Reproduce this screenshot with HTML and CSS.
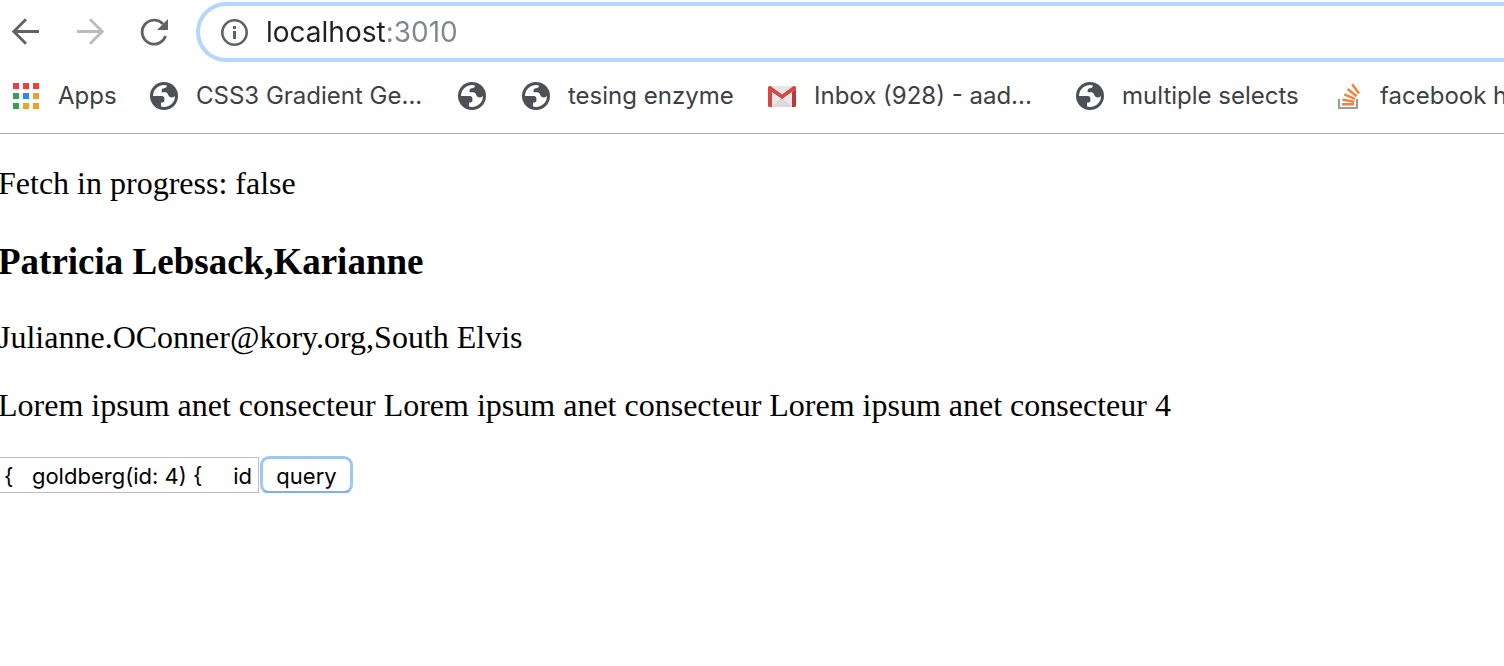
FILE: index.html
```html
<!DOCTYPE html>
<html lang="en">
<head>
<meta charset="utf-8">
<title>localhost:3010</title>
<link rel="stylesheet" href="styles.css">
</head>
<body>
<svg class="defs" aria-hidden="true">
  <symbol id="globe" viewBox="0 0 28 28">
    <circle cx="14" cy="14" r="14" fill="#4d5156"/>
    <path fill="#fff" d="M3 14A11 11 0 0 1 17 3.400C16.800 5.200 15.500 6.200 14 6.200C12.300 6.400 11.600 7.400 11.600 9V10.200H15C17 10.200 17.600 11.500 18.300 13C19 14.800 20 15.400 22 15.400C23.300 15.400 24.200 14.800 25 14A11 11 0 0 1 11 24.600V20.400H12.500C14 20.400 14.400 20 14.400 18.600V16.800C14.400 14.800 13.400 14 12 14Z"/>
  </symbol>
</svg>
<header class="chrome">
  <div class="toolbar">
    <nav class="nav">
      <button class="icon-button" aria-label="Back"><svg width="28" height="28" viewBox="0 0 28 28"><path d="M27 13.500H2.500M14 1.300L1.800 13.500L14 25.700" fill="none" stroke="#5f6368" stroke-width="2.800"/></svg></button>
      <button class="icon-button" aria-label="Forward" disabled><svg width="28" height="28" viewBox="0 0 28 28"><path d="M1 13.500H25.500M14 1.300L26.200 13.500L14 25.700" fill="none" stroke="#babcbe" stroke-width="2.800"/></svg></button>
      <button class="icon-button" aria-label="Reload"><svg width="28" height="28" viewBox="0 0 28 28"><path d="M25.500 18A12 12 0 1 1 23 6" fill="none" stroke="#5f6368" stroke-width="2.900"/><path d="M28 1V12H17Z" fill="#5f6368"/></svg></button>
    </nav>
    <div class="omnibox">
      <svg width="28" height="28" viewBox="0 0 28 28" aria-hidden="true"><circle cx="14.500" cy="14.500" r="12.200" fill="none" stroke="#5f6368" stroke-width="2.600"/><path d="M13 8h3v3h-3zM13 13h3v8h-3z" fill="#5f6368"/></svg>
      <input class="address" type="text" value="localhost:3010" aria-label="Address" spellcheck="false">
    </div>
  </div>
  <nav class="bookmarks" aria-label="Bookmarks">
    <a class="bookmark apps" href="#"><svg width="26" height="26" viewBox="0 0 26 26"><path fill="#f43b3e" d="M0 0h6v6H0zM10 0h6v6h-6zM20 0h6v6h-6z"/><path fill="#3a9d5c" d="M0 10h6v6H0zM0 20h6v6H0z"/><path fill="#2a8cf2" d="M10 10h6v6h-6z"/><path fill="#f0a026" d="M20 10h6v6h-6zM10 20h6v6h-6zM20 20h6v6h-6z"/></svg><span>Apps</span></a>
    <a class="bookmark gradient" href="#"><svg width="28" height="28"><use href="#globe"/></svg><span>CSS3 Gradient Ge...</span></a>
    <a class="bookmark untitled" href="#" aria-label="Bookmark"><svg width="28" height="28"><use href="#globe"/></svg></a>
    <a class="bookmark enzyme" href="#"><svg width="28" height="28"><use href="#globe"/></svg><span>tesing enzyme</span></a>
    <a class="bookmark inbox" href="#"><svg width="28" height="28" viewBox="0 0 28 28"><path fill="#e9e9e9" d="M1 4h26v21H1z"/><path fill="#dadada" d="M4 25L14 15L24 25Z"/><path fill="#e6e6e6" d="M3 4h22L14 13z"/><path fill="#d5483f" d="M0 5.500Q0 4 1.500 4H2.500L14 12.500L25.500 4H26.500Q28 4 28 5.500V7L14 17L4 10V25H1.500Q0 25 0 23.500Z"/><path fill="#b93a32" d="M24 10L28 7V23.500Q28 25 26.500 25H24Z"/></svg><span>Inbox (928) - aad...</span></a>
    <a class="bookmark selects" href="#"><svg width="28" height="28"><use href="#globe"/></svg><span>multiple selects</span></a>
    <a class="bookmark facebook" href="#"><svg width="28" height="28" viewBox="0 0 28 28"><path d="M1 17v9h18v-9" fill="none" stroke="#9a9ea3" stroke-width="2"/><path d="M4 22.200H16M4.400 17.600L16.300 19.800M6.300 12.300L17.200 17M9.600 7L18.600 14.200M14.200 2.200L21 11.500" fill="none" stroke="#f48036" stroke-width="2.400"/></svg><span>facebook h</span></a>
  </nav>
</header>
<main class="page">
  <p>Fetch in progress: false</p>
  <h3>Patricia Lebsack,Karianne</h3>
  <p>Julianne.OConner@kory.org,South Elvis</p>
  <p>Lorem ipsum anet consecteur Lorem ipsum anet consecteur Lorem ipsum anet consecteur 4</p>
  <form class="query">
    <input class="query-text" type="text" aria-label="Query" spellcheck="false" value="{   goldberg(id: 4) {     id">
    <button class="query-button" type="button">query</button>
  </form>
</main>
</body>
</html>
```
FILE: styles.css
```css
* {
  box-sizing: border-box;
}

body {
  margin: 0;
  background: #fff;
  color: #000;
  overflow-x: hidden;
}

svg {
  display: block;
  flex: none;
}

.defs {
  position: absolute;
  width: 0;
  height: 0;
}

.chrome {
  font-family: Inter, "Liberation Sans", sans-serif;
  border-bottom: 1px solid #b4b4b4;
  overflow: hidden;
}

.toolbar {
  display: flex;
  align-items: center;
  padding: 2px 0 0 12px;
}

.nav {
  display: flex;
  gap: 36px;
  margin-right: 28px;
}

.icon-button {
  padding: 0;
  border: 0;
  background: none;
}

.omnibox {
  display: flex;
  flex: 1;
  align-items: center;
  gap: 18px;
  height: 60px;
  padding-left: 20px;
  border: 4px solid #b3d6fb;
  border-right: 0;
  border-radius: 30px 0 0 30px;
}

.address {
  flex: 1;
  min-width: 0;
  padding: 0;
  border: 0;
  outline: 0;
  font: 28px/40px Inter, "Liberation Sans", sans-serif;
  color: transparent;
  background: linear-gradient(to right, #202124 120px, #80868b 120px);
  -webkit-background-clip: text;
  background-clip: text;
}

.bookmarks {
  display: flex;
  align-items: center;
  height: 71px;
  padding: 0 0 4px 13px;
}

.bookmark {
  display: flex;
  flex: none;
  align-items: center;
  gap: 18px;
  font-size: 24px;
  line-height: 32px;
  color: #3c4043;
  text-decoration: none;
  white-space: nowrap;
}

.apps {
  gap: 19px;
  width: 137px;
}

.gradient {
  width: 308px;
}

.untitled {
  width: 64px;
}

.enzyme {
  width: 246px;
}

.inbox {
  width: 308px;
}

.selects {
  width: 262px;
}

.facebook {
  gap: 14px;
}

.page {
  margin-left: -2px;
  font: 32px/37px "Liberation Serif", "Times New Roman", serif;
}

.page p {
  margin: 31px 0;
}

.page h3 {
  margin: 38px 0 35px;
  font-size: 37px;
  line-height: 44px;
}

.query {
  display: flex;
  align-items: center;
  gap: 2px;
  margin-top: 33px;
}

.query-text,
.query-button {
  height: 36px;
  font: 22px/28px Inter, "Liberation Sans", sans-serif;
  color: #000;
  background: #fff;
}

.query-text {
  width: 261px;
  padding: 4px 4px 2px 6px;
  border: 1px solid #bdbdbd;
  border-left: 0;
  outline: 0;
  white-space: pre;
}

.query-button {
  width: 91px;
  padding: 2px 0 0;
  border: 2px solid #9cc7f7;
  border-bottom-color: #7fb0e8;
  border-radius: 8px;
  box-shadow: 0 0 0 1px #9cc7f7;
}
```
